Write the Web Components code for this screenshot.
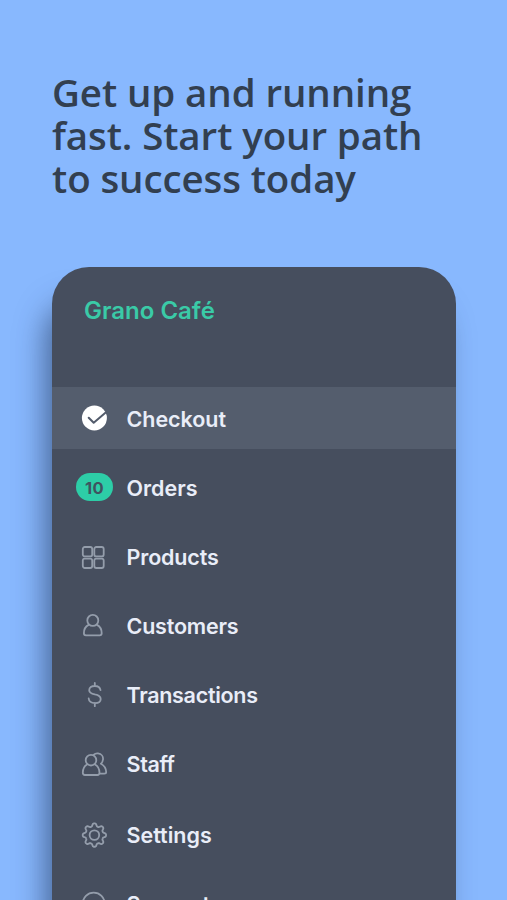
<!DOCTYPE html>
<html lang="en">
<head>
<meta charset="utf-8">
<title>Grano Café</title>
<style>
  html, body {
    margin: 0;
    height: 900px;
    overflow: hidden;
    background: #88b8fe;
  }
</style>
</head>
<body>
<promo-screen>
  <span slot="title">Get up and running<br>fast. Start your path<br>to success today</span>
  <side-menu name="Grano Café">
    <menu-row icon="check" active style="--track: -0.05px">Checkout</menu-row>
    <menu-row badge="10">Orders</menu-row>
    <menu-row icon="grid" style="--track: -0.15px">Products</menu-row>
    <menu-row icon="person" style="--track: -0.2px">Customers</menu-row>
    <menu-row icon="dollar" style="--track: -0.3px">Transactions</menu-row>
    <menu-row icon="people" style="--track: -0.35px">Staff</menu-row>
    <menu-row icon="gear" style="margin-top: 2px">Settings</menu-row>
    <menu-row icon="help">Support</menu-row>
  </side-menu>
</promo-screen>

<script>
  const icons = {
    check: `<circle cx="12.4" cy="13" r="12.5" fill="#fff" stroke="none"/><path d="M6.7 12.7l5 5.1L24 7.2" stroke="#525b6b" stroke-width="2"/>`,
    grid: `<rect x="0.8" y="4" width="9.4" height="9.4" rx="2"/><rect x="12.3" y="4" width="9.4" height="9.4" rx="2"/><rect x="0.8" y="15.6" width="9.4" height="9.4" rx="2"/><rect x="12.3" y="15.6" width="9.4" height="9.4" rx="2"/>`,
    person: `<circle cx="10.8" cy="8.4" r="5.5"/><path d="M6.6 12.9C3.4 14.5 1.9 17.4 1.9 21.3Q1.9 23.3 3.9 23.3H17.7Q19.7 23.3 19.7 21.3C19.7 17.4 18.2 14.5 15 12.9"/>`,
    dollar: `<path d="M12.8 1.9V5M12.8 22V25.2M18.5 9.1C18 6.3 16 5 12.8 5C9.5 5 7.2 6.5 7.2 9.2C7.2 12 9.7 12.7 12.8 13.4C16.4 14.1 18.7 15 18.7 17.9C18.7 20.6 16.4 22.1 13 22.1C9.5 22.1 7 20.5 6.7 17.5"/>`,
    people: `<circle cx="9" cy="10.2" r="5.3"/><path d="M5 14.5C2.2 16.2 0.8 19 0.8 22.8Q0.8 25 3 25H15.4Q17.5 25 17.5 22.8C17.5 19 16 16.2 13 14.5M11.5 5C13 3.5 14.5 3.2 16 3.4C19.4 3.9 21.4 6.6 21 9.5C20.8 11.2 20.1 12.7 18.9 13.7C22.2 15.4 24 18.2 24.2 22.1Q24.2 23.7 22.3 23.7H18"/>`,
    gear: `<circle cx="12.4" cy="14.1" r="4.8"/><path d="${gearPath(12.4, 14.1)}"/>`,
    help: `<circle cx="11.7" cy="13.7" r="11"/>`,
  };

  // eight rounded teeth around the centre
  function gearPath(cx, cy) {
    const points = [];
    for (let i = 0; i < 96; i++) {
      const angle = i / 96 * Math.PI * 2;
      const wave = Math.max(-1, Math.min(1, Math.cos(angle * 8) * 1.5));
      const radius = 10.3 + wave * 1.35;
      points.push(`${(cx + radius * Math.cos(angle)).toFixed(2)} ${(cy + radius * Math.sin(angle)).toFixed(2)}`);
    }
    return `M${points.join("L")}Z`;
  }

  class PromoScreen extends HTMLElement {
    constructor() {
      super();
      this.attachShadow({ mode: "open" }).innerHTML = `
        <style>
          :host {
            display: flex;
            flex-direction: column;
            box-sizing: border-box;
            height: 900px;
            overflow: hidden;
            padding: 71px 51px 0 52px;
          }

          h1 {
            flex: none;
            margin: 0;
            height: 196px;
            color: #323f50;
            font: 600 38.5px/43px "Open Sans", sans-serif;
            letter-spacing: -0.1px;
            white-space: nowrap;
          }
        </style>
        <h1><slot name="title"></slot></h1>
        <slot></slot>
      `;
    }
  }

  class SideMenu extends HTMLElement {
    constructor() {
      super();
      this.attachShadow({ mode: "open" }).innerHTML = `
        <style>
          :host {
            display: block;
            flex: none;
            height: 720px;
            background: #464e5e;
            border-radius: 37px 37px 0 0;
            box-shadow: -10px 32px 30px -4px rgba(30, 50, 85, 0.62);
            font-family: Inter, sans-serif;
          }

          header {
            box-sizing: border-box;
            height: 120px;
            padding: 28px 32px 0;
            color: #3acaa7;
            font-size: 24px;
            font-weight: 600;
            line-height: 31px;
            letter-spacing: 0;
          }

          nav {
            display: flex;
            flex-direction: column;
            gap: 7px;
          }
        </style>
        <header></header>
        <nav><slot></slot></nav>
      `;
    }

    connectedCallback() {
      this.shadowRoot.querySelector("header").textContent = this.getAttribute("name");
    }
  }

  class MenuRow extends HTMLElement {
    constructor() {
      super();
      this.attachShadow({ mode: "open" }).innerHTML = `
        <style>
          :host {
            display: grid;
            grid-template-columns: 37px 1fr;
            column-gap: 13.5px;
            align-items: center;
            box-sizing: border-box;
            height: 62px;
            padding-left: 24px;
            color: #e9edf8;
            font-size: 21.5px;
            font-weight: 600;
            line-height: 28px;
          }

          :host([active]) {
            background: #545d6d;
          }

          #icon {
            display: flex;
            padding-left: 6px;
          }

          svg {
            width: 26px;
            height: 26px;
            overflow: visible;
            fill: none;
            stroke: #949dab;
            stroke-width: 1.8;
            stroke-linecap: round;
            stroke-linejoin: round;
          }

          #badge {
            height: 28px;
            border-radius: 14px;
            background: #2dcda7;
            color: #3f5360;
            font-size: 16.5px;
            font-weight: 700;
            line-height: 30px;
            letter-spacing: 0.4px;
            text-align: center;
          }

          #label {
            padding-top: 2px;
            letter-spacing: var(--track, 0);
          }
        </style>
        <div id="lead"></div>
        <div id="label"><slot></slot></div>
      `;
    }

    connectedCallback() {
      const lead = this.shadowRoot.querySelector("#lead");
      const badge = this.getAttribute("badge");
      lead.innerHTML = badge
        ? `<div id="badge">${badge}</div>`
        : `<div id="icon"><svg viewBox="0 0 26 26">${icons[this.getAttribute("icon")]}</svg></div>`;
    }
  }

  customElements.define("promo-screen", PromoScreen);
  customElements.define("side-menu", SideMenu);
  customElements.define("menu-row", MenuRow);
</script>
</body>
</html>
